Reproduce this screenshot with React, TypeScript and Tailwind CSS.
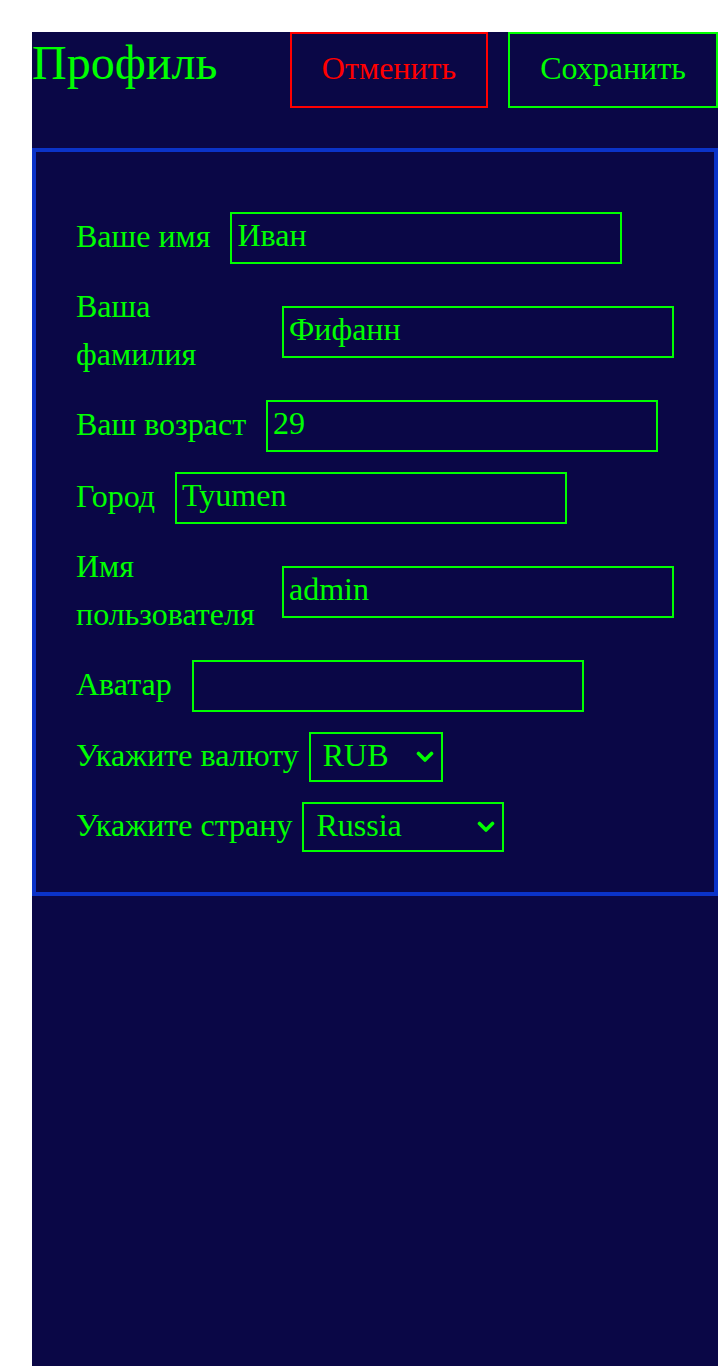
import React from "react";

const font = { fontFamily: '"Liberation Serif", "Times New Roman", serif' };

function Row({ label, value }: { label: string; value: string }) {
  return (
    <div className="flex items-center">
      <label className="-translate-y-[2px] text-[32px] leading-[1.5] text-[#00ff00]">{label}</label>
      <input
        defaultValue={value}
        className="ml-5 h-[52px] w-[392px] shrink-0 border-2 border-[#00ff00] bg-transparent px-[5px] pb-[5px] text-[32px] text-[#00ff00] outline-none"
        style={font}
      />
    </div>
  );
}

function SelectRow({ label, value, options, width }: { label: string; value: string; options: string[]; width: string }) {
  return (
    <div className="flex items-center">
      <label className="-translate-y-[2px] text-[32px] leading-[1.5] text-[#00ff00]">{label}</label>
      <div className={`relative ml-[10px] h-[50px] shrink-0 ${width}`}>
        <select
          defaultValue={value}
          className="h-full w-full appearance-none border-2 border-[#00ff00] bg-transparent pb-[4px] pl-[12px] pr-[30px] text-[32px] leading-[normal] text-[#00ff00] outline-none"
          style={font}
        >
          {options.map((o) => (
            <option key={o} value={o} className="bg-[#0a0746]">
              {o}
            </option>
          ))}
        </select>
        <svg
          className="pointer-events-none absolute right-[9px] top-1/2 -translate-y-1/2"
          width="18"
          height="12"
          viewBox="0 0 18 12"
          fill="none"
        >
          <polyline points="2.5,2.5 9,9 15.5,2.5" stroke="#00ff00" strokeWidth="3.6" strokeLinecap="round" strokeLinejoin="round" />
        </svg>
      </div>
    </div>
  );
}

export default function App() {
  return (
    <div className="min-h-[1366px] bg-white pl-8 pt-8" style={font}>
      <div className="min-h-[1334px] w-[686px] bg-[#0a0746]">
        <div className="flex h-[76px] items-start justify-between">
          <h1 className="mt-[3px] text-[48px] leading-[normal] text-[#00ff00]">Профиль</h1>
          <div className="flex gap-5">
            <button className="flex h-[76px] w-[198px] items-center justify-center border-2 border-[#ff0000] bg-transparent pb-[5px] text-[32px] text-[#ff0000]">
              Отменить
            </button>
            <button className="flex h-[76px] w-[210px] items-center justify-center border-2 border-[#00ff00] bg-transparent pb-[5px] text-[32px] text-[#00ff00]">
              Сохранить
            </button>
          </div>
        </div>
        <div className="mt-10 flex flex-col gap-5 border-4 border-[#0b33c8] px-10 pb-10 pt-[60px]">
          <Row label="Ваше имя" value="Иван" />
          <Row label="Ваша фамилия" value="Фифанн" />
          <Row label="Ваш возраст" value="29" />
          <Row label="Город" value="Tyumen" />
          <Row label="Имя пользователя" value="admin" />
          <Row label="Аватар" value="" />
          <SelectRow label="Укажите валюту" value="RUB" options={["RUB", "USD", "EUR"]} width="w-[134px]" />
          <SelectRow label="Укажите страну" value="Russia" options={["Russia", "Kazakhstan", "Belarus"]} width="w-[202px]" />
        </div>
      </div>
    </div>
  );
}
